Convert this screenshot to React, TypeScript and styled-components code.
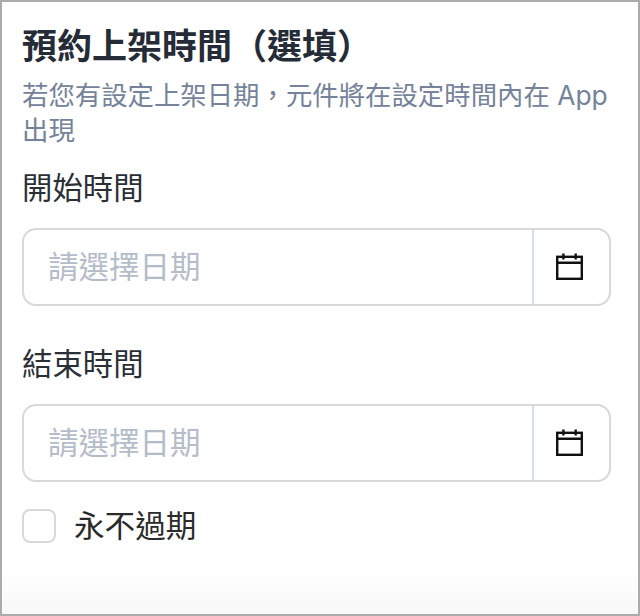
import styled, { createGlobalStyle } from 'styled-components';

const GlobalStyle = createGlobalStyle`
  html,
  body {
    margin: 0;
    padding: 0;
    background: #fff;
  }

  * {
    box-sizing: border-box;
  }
`;

const CalendarIcon = () => (
  <svg width="28" height="28" viewBox="0 0 28 28" fill="none" stroke="#111" strokeWidth="2.4">
    <rect x="1.2" y="3.8" width="24.6" height="22" />
    <path d="M1.2 9.8h24.6M7.4 0.6v6M19.7 0.6v6" />
  </svg>
);

const DateField = ({ label }: { label: string }) => (
  <Field>
    <Label>{label}</Label>
    <InputBox>
      <Placeholder>請選擇日期</Placeholder>
      <IconCell>
        <CalendarIcon />
      </IconCell>
    </InputBox>
  </Field>
);

const App = () => (
  <>
    <GlobalStyle />
    <Frame>
      <Title>預約上架時間（選填）</Title>
      <Description>若您有設定上架日期，元件將在設定時間內在 App 出現</Description>
      <Fields>
        <DateField label="開始時間" />
        <DateField label="結束時間" />
      </Fields>
      <CheckRow>
        <CheckBox />
        <CheckLabel>永不過期</CheckLabel>
      </CheckRow>
    </Frame>
  </>
);

export default App;

const Frame = styled.div`
  width: 640px;
  height: 616px;
  padding: 22px 27px 0 20px;
  overflow: hidden;
  font-family: 'Inter', 'Noto Sans CJK TC', sans-serif;
  background: linear-gradient(to bottom, #fff 0, #fff 565px, #f8f8f8 614px);
  border: 2px solid #acacac;
`;

const Title = styled.h1`
  margin: 0;
  font-size: 35px;
  font-weight: 700;
  line-height: 44px;
  color: #252b37;
`;

const Description = styled.p`
  margin: 10px 0 0;
  font-size: 26.4px;
  line-height: 35px;
  color: #75829a;
`;

const Fields = styled.div`
  display: flex;
  flex-direction: column;
  gap: 38px;
  margin-top: 20px;
`;

const Field = styled.div`
  display: flex;
  flex-direction: column;
  gap: 20px;
`;

const Label = styled.label`
  font-size: 30.4px;
  line-height: 40px;
  color: #2b2f36;
`;

const InputBox = styled.div`
  display: flex;
  height: 78px;
  background: #fff;
  border: 2px solid #d9d9d9;
  border-radius: 14px;
`;

const Placeholder = styled.span`
  flex: 1;
  padding-left: 24px;
  font-size: 30.5px;
  line-height: 74px;
  color: #b4bcc9;
`;

const IconCell = styled.div`
  display: flex;
  flex: none;
  align-items: center;
  justify-content: center;
  width: 77px;
  padding-right: 3px;
  border-left: 2px solid #d5e0ea;
`;

const CheckRow = styled.div`
  display: flex;
  gap: 18px;
  align-items: center;
  margin-top: 24px;
`;

const CheckBox = styled.span`
  width: 34px;
  height: 34px;
  background: #fff;
  border: 2px solid #d9d9d9;
  border-radius: 8px;
`;

const CheckLabel = styled.span`
  font-size: 30.6px;
  line-height: 40px;
  color: #2b2b2b;
`;
